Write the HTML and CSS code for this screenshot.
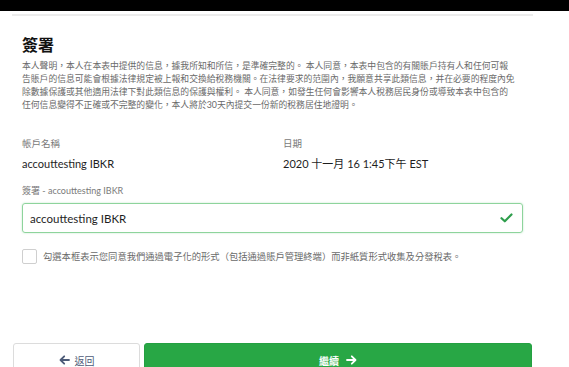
FILE: index.html
```html
<!DOCTYPE html>
<html lang="zh-Hant">
<head>
  <meta charset="UTF-8">
  <title>簽署</title>
  <link rel="stylesheet" href="styles.css">
</head>
<body>
  <div class="topbar"></div>

  <div class="page">
    <div class="rule"></div>

    <main class="content">
      <h1>簽署</h1>
      <p class="declaration">本人聲明，本人在本表中提供的信息，據我所知和所信，是準確完整的。 本人同意，本表中包含的有關賬戶持有人和任何可報<br>告賬戶的信息可能會根據法律規定被上報和交換給稅務機關。在法律要求的范圍內，我願意共享此類信息，并在必要的程度內免<br>除數據保護或其他適用法律下對此類信息的保護與權利。 本人同意，如發生任何會影響本人稅務居民身份或導致本表中包含的<br>任何信息變得不正確或不完整的變化，本人將於30天內提交一份新的稅務居住地證明。</p>

      <div class="details">
        <div class="field">
          <div class="label">帳戶名稱</div>
          <div class="value">accouttesting IBKR</div>
        </div>
        <div class="field">
          <div class="label">日期</div>
          <div class="value">2020 十一月 16 1:45下午 EST</div>
        </div>
      </div>

      <div class="label sig-label">簽署 - accouttesting IBKR</div>
      <div class="sig-input">
        <input type="text" value="accouttesting IBKR">
        <svg class="check" width="13" height="10" viewBox="0 0 13 10">
          <path d="M1.5 5.2 L4.8 8.3 L11.5 1.5" fill="none" stroke="#2e9e4c" stroke-width="2.2" stroke-linecap="round" stroke-linejoin="round"/>
        </svg>
      </div>

      <label class="consent">
        <span class="box"></span>
        <span class="consent-text">勾選本框表示您同意我們通過電子化的形式（包括通過賬戶管理終端）而非紙質形式收集及分發稅表。</span>
      </label>
    </main>

    <div class="actions">
      <button class="btn back">
        <svg width="11" height="10" viewBox="0 0 11 10"><path d="M10 5 H1.8 M5.2 1.3 L1.5 5 L5.2 8.7" fill="none" stroke="#4d5b78" stroke-width="1.8" stroke-linecap="round" stroke-linejoin="round"/></svg>
        返回
      </button>
      <button class="btn next">
        繼續
        <svg width="11" height="10" viewBox="0 0 11 10"><path d="M1 5 H9.2 M5.8 1.3 L9.5 5 L5.8 8.7" fill="none" stroke="#ffffff" stroke-width="1.8" stroke-linecap="round" stroke-linejoin="round"/></svg>
      </button>
    </div>
  </div>
</body>
</html>
```

FILE: styles.css
```css
body {
  margin: 0;
  background: #fff;
  font-family: Lato, "Noto Sans CJK TC", sans-serif;
  color: #222;
  overflow: hidden;
}
.topbar {
  height: 11px;
  background: #000;
}
.page {
  padding: 0 36px 0 12px;
}
.rule {
  margin-top: 3px;
  height: 2px;
  background: #ececec;
}
.content {
  padding: 0 10px;
}
h1 {
  margin: 19px 0 0;
  font-size: 16px;
  line-height: 20px;
  font-weight: bold;
  color: #111;
}
.declaration {
  margin: 4px 0 0;
  font-size: 8.8px;
  line-height: 13px;
  color: #6a6a6a;
  white-space: nowrap;
}
.details {
  display: grid;
  grid-template-columns: 261px 1fr;
  margin-top: 26px;
}
.label {
  font-size: 9.5px;
  line-height: 13px;
  color: #7a7a7a;
}
.value {
  margin-top: 6px;
  font-size: 11px;
  line-height: 16px;
  color: #1e1e1e;
}
.sig-label {
  margin-top: 12px;
  font-size: 9px;
}
.sig-input {
  margin-top: 6px;
  display: flex;
  align-items: center;
  height: 30px;
  box-sizing: border-box;
  border: 1.5px solid #8ed49c;
  border-radius: 3px;
  box-shadow: 0 0 2px rgba(60, 180, 90, 0.35);
  padding: 0 8px 0 7px;
}
.sig-input input {
  flex: 1;
  border: none;
  outline: none;
  padding: 0;
  font-family: inherit;
  font-size: 11.5px;
  color: #1e1e1e;
  background: transparent;
}
.check {
  margin-right: 1px;
}
.consent {
  display: flex;
  align-items: center;
  gap: 6px;
  margin-top: 16px;
}
.box {
  width: 15px;
  height: 15px;
  box-sizing: border-box;
  border: 1px solid #cfcfcf;
  border-radius: 2px;
  background: #fff;
}
.consent-text {
  font-size: 9.3px;
  line-height: 13px;
  color: #6a6a6a;
  white-space: nowrap;
}
.actions {
  display: flex;
  gap: 4px;
  margin: 79px 0 0 1px;
  margin-right: 1px;
}
.btn {
  height: 38px;
  border-radius: 3px;
  font-family: inherit;
  font-size: 10px;
  display: flex;
  align-items: center;
  justify-content: center;
  gap: 5px;
  padding: 0 0 4px;
  cursor: pointer;
}
.back {
  width: 127px;
  background: #fff;
  border: 1px solid #dcdcdc;
  color: #4d5b78;
}
.next {
  flex: 1;
  background: #28a745;
  border: 1px solid #24a042;
  color: #fff;
  font-weight: bold;
  gap: 7px;
}
```
